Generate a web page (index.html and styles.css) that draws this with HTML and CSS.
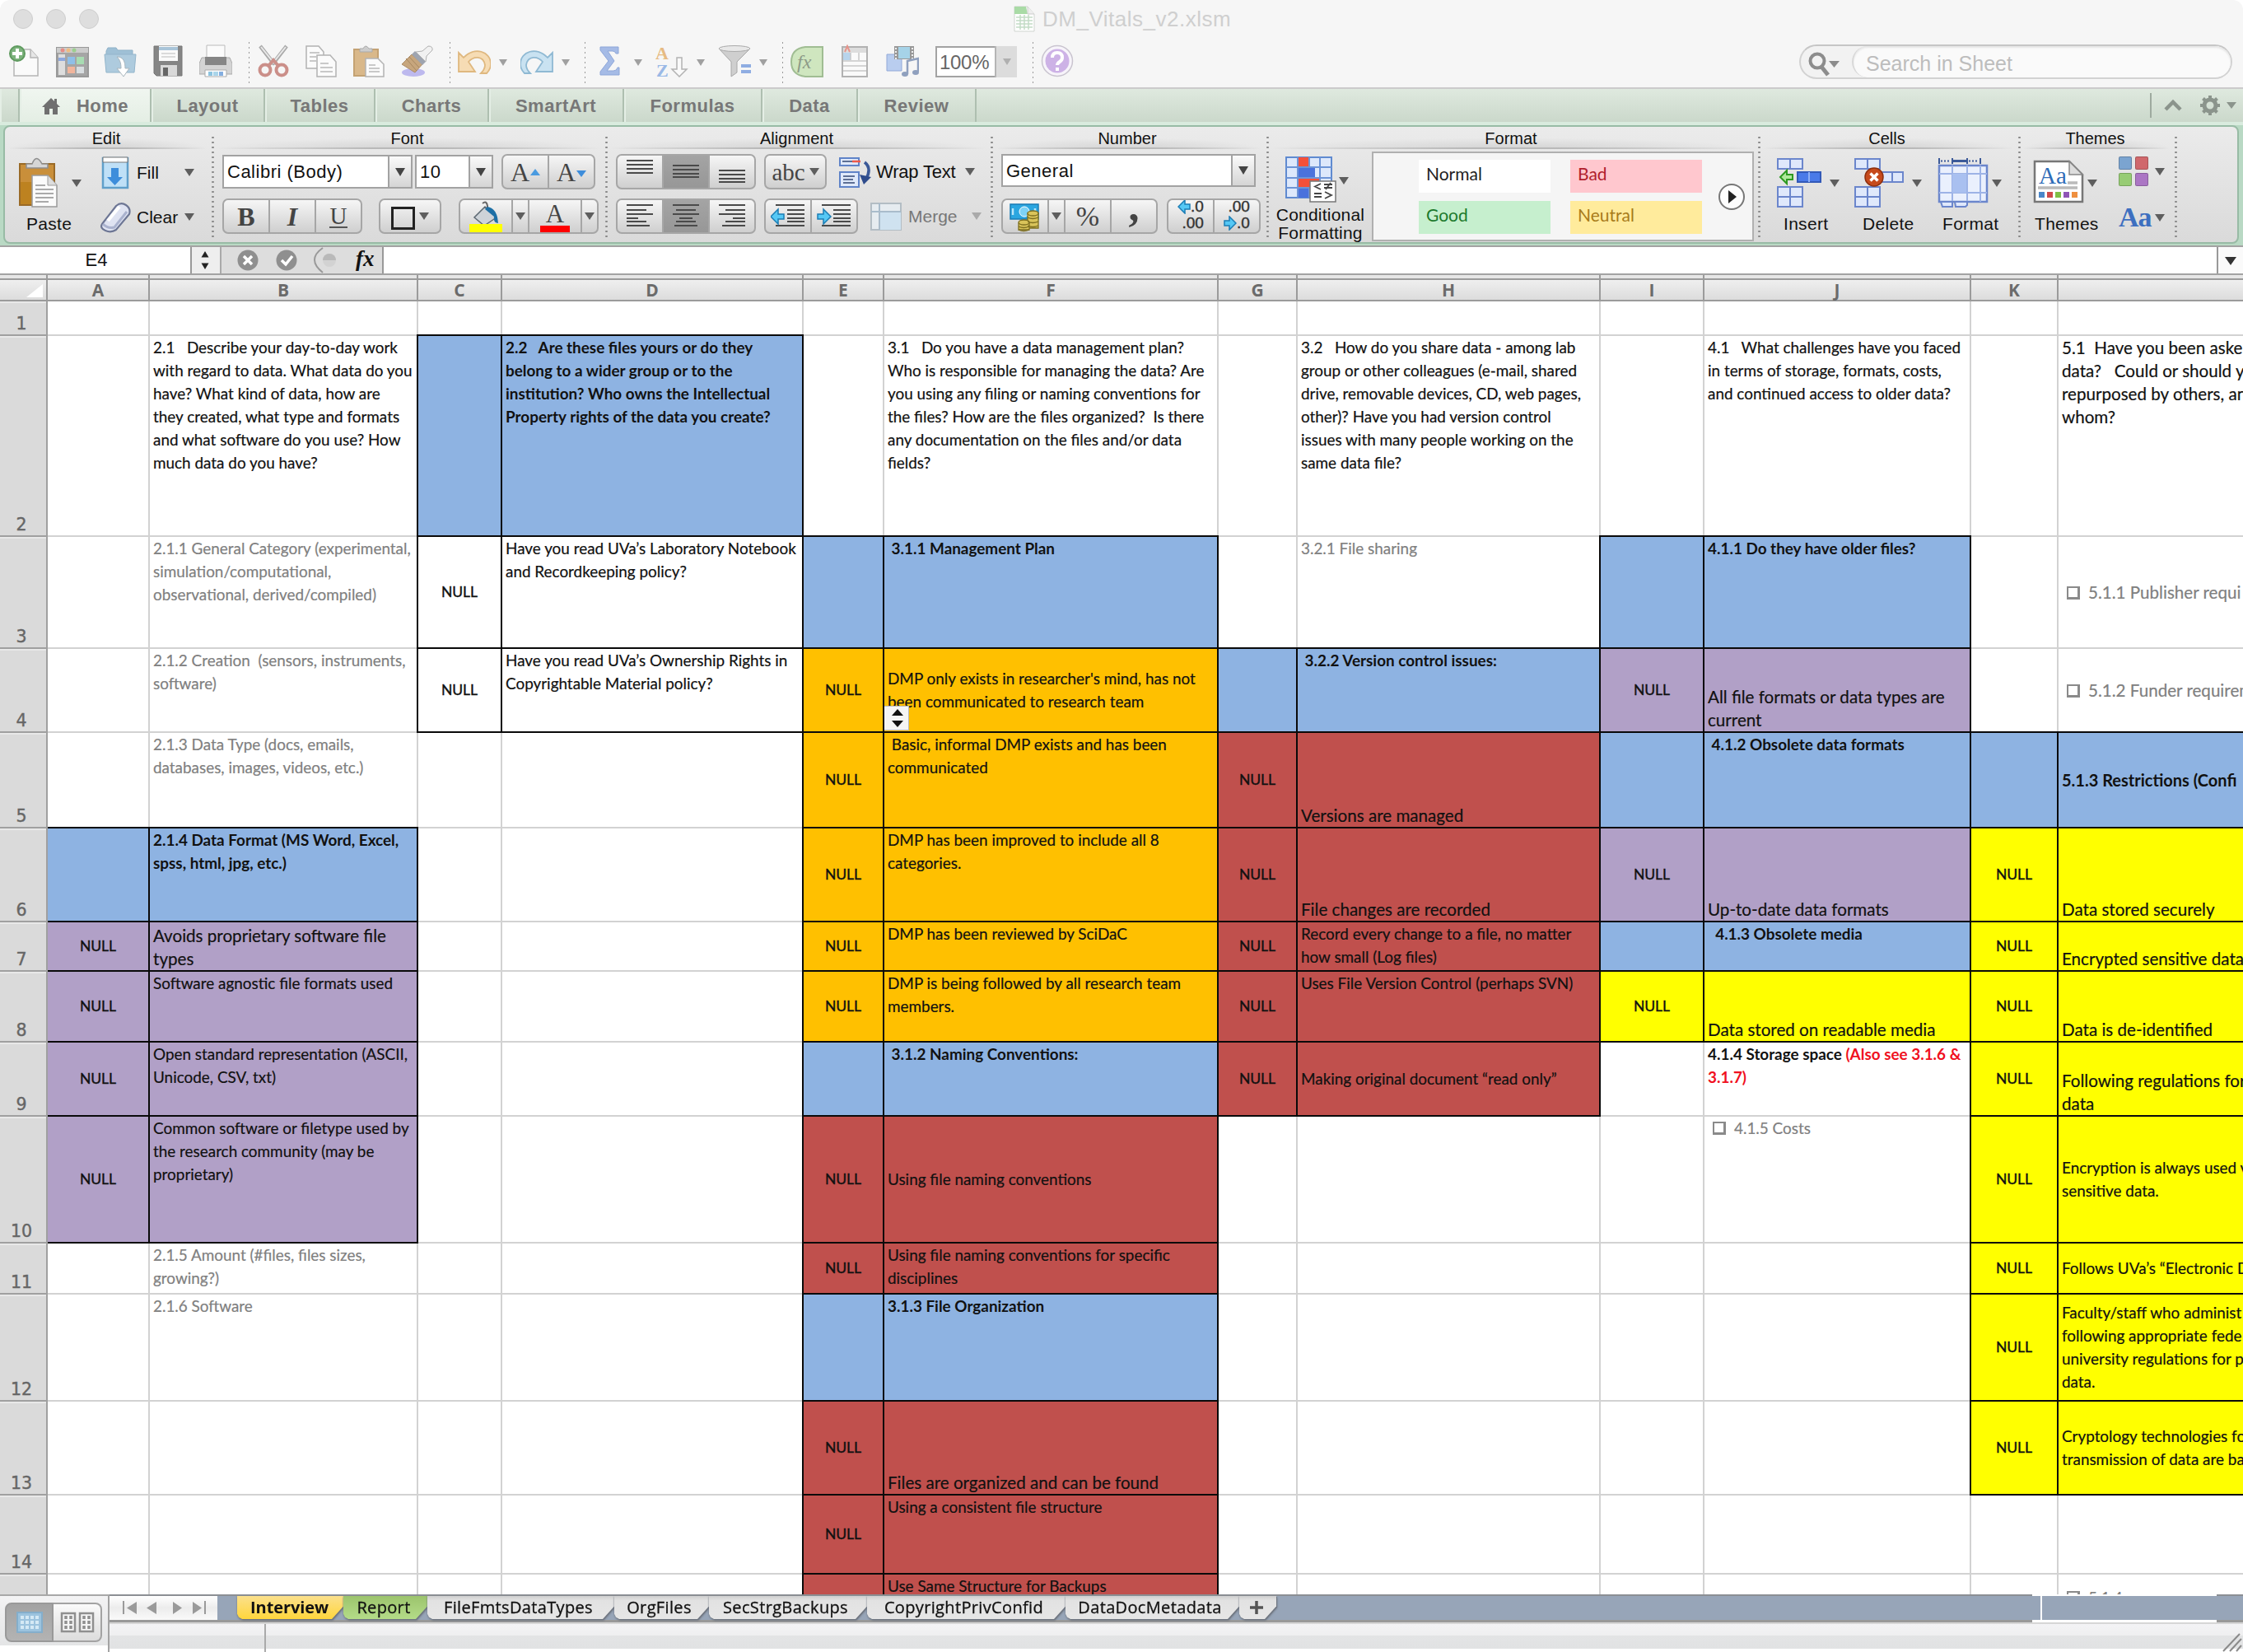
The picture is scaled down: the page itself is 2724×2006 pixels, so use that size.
FILE: index.html
```html
<!DOCTYPE html>
<html lang="en">
<head>
<meta charset="utf-8">
<title>DM_Vitals_v2.xlsm</title>
<link rel="stylesheet" href="styles.css">
</head>
<body>
<div class="window">
<header class="chrome">
  <div class="titlebar">
    <div class="lights"><i></i><i></i><i></i></div>
    <div class="doc-title">
      <svg width="26" height="32" viewBox="0 0 26 32"><path d="M1 1h16l8 9v21H1z" fill="#fff" stroke="#cfd4cf"/><path d="M1 1h14l2 9H1z" fill="#a9dba6"/><path d="M17 1v9h8" fill="#eee" stroke="#ccc"/><path d="M3 14h20M3 18h20M3 22h20M3 26h20M8 11v18M13 11v18M18 11v18" stroke="#c3dcc6" stroke-width="1.5"/></svg>
      <span>DM_Vitals_v2.xlsm</span>
    </div>
  </div>
  <div class="toolbar">
    <div class="tool"><svg viewBox="0 0 40 40"><path d="M7 6h20l9 10v22H7z" fill="#fafafa" stroke="#b5b5b5" stroke-width="1.5"/><path d="M27 6v10h9" fill="#e6e6e6" stroke="#b5b5b5" stroke-width="1.5"/><circle cx="11" cy="11" r="9" fill="#7cb27c" stroke="#5e9a5e" stroke-width="2"/><path d="M11 5v12M5 11h12" stroke="#fff" stroke-width="4"/></svg></div>
    <div class="tool"><svg viewBox="0 0 40 40"><path d="M1 4h38v35H1z" fill="#a5a5a5" stroke="#999" stroke-width="2"/><path d="M1 4h38v6H1z" fill="#ccc"/><path d="M3 12h8v25H3z" fill="#ddd"/><path d="M3 16h8v4H3z" fill="#8ea8de"/><circle cx="8" cy="7" r="2.5" fill="#e58c86"/><circle cx="15" cy="7" r="2.5" fill="#edbc82"/><circle cx="22" cy="7" r="2.5" fill="#9bcf8e"/><path d="M14 15h9v9h-9z" fill="#8fbfe8"/><path d="M25 15h9v9h-9z" fill="#a8dcb2"/><path d="M14 27h9v8h-9z" fill="#f1b59c"/><path d="M25 27h9v8h-9z" fill="#d8dde0"/></svg></div>
    <div class="tool"><svg viewBox="0 0 40 40"><path d="M3 8l2-4h10l2 3h18v6H3z" fill="#9fc0d6" stroke="#8fb1c8"/><path d="M1 12h38l-2 22H3z" fill="#aecbde" stroke="#93b5cb"/><path d="M16 15c8 0 10 6 10 14h5l-7 10-8-10h5c0-6-1-10-5-14z" fill="#fff" stroke="#a9b6be"/></svg></div>
    <div class="tool"><svg viewBox="0 0 40 40"><path d="M3 2h34v36H6l-3-3z" fill="#858585" stroke="#777"/><path d="M9 2h23v18H9z" fill="#fafafa"/><path d="M9 3h23v4H9z" fill="#a9c4d8"/><path d="M12 11h17M12 15h17" stroke="#bbb"/><path d="M11 25h20v13H11z" fill="#d9d9d9"/><path d="M14 28h6v10h-6z" fill="#666"/></svg></div>
    <div class="tool"><svg viewBox="0 0 40 40"><path d="M9 1h22v16H9z" fill="#fbfbfb" stroke="#bbb"/><path d="M3 16h34l3 7v13H0V23z" fill="#d4d4d4" stroke="#aaa"/><path d="M7 15h26v10H7z" fill="#868686"/><path d="M7 31h26v8H7z" fill="#fff" stroke="#aaa"/><path d="M11 33h5v5h-5z" fill="#8cc4e0"/><path d="M17 33h6v5h-6z" fill="#aad5ea"/><path d="M24 33h5v5h-5z" fill="#84aee0"/></svg></div>
    <div class="sep"></div>
    <div class="tool"><svg viewBox="0 0 40 40"><path d="M4 2l17 22M36 2L19 24" stroke="#aaa" stroke-width="4.5"/><path d="M5 3l16 20M35 3L19 23" stroke="#e9e9e9" stroke-width="2"/><circle cx="10" cy="31" r="6.5" fill="none" stroke="#cb8f89" stroke-width="4"/><circle cx="30" cy="31" r="6.5" fill="none" stroke="#cb8f89" stroke-width="4"/><path d="M14 26l6-7 6 7" fill="none" stroke="#cb8f89" stroke-width="4"/></svg></div>
    <div class="tool"><svg viewBox="0 0 40 40"><g fill="#fbfbfb" stroke="#b3b3b3" stroke-width="1.5"><path d="M2 2h15l6 7v20H2z"/><path d="M15 13h16l7 8v18H15z"/></g><path d="M6 10h12M6 15h8M6 20h8M19 23h10M19 28h15M19 33h15" stroke="#b9b9b9" stroke-width="1.6"/></svg></div>
    <div class="tool"><svg viewBox="0 0 40 40"><path d="M2 6h29v32H2z" fill="#d9b88a" stroke="#c4a273" stroke-width="2"/><path d="M9 9V5h4q3-6 7 0h4v4z" fill="#ccc" stroke="#aaa"/><path d="M16 17h15l7 7v15H16z" fill="#fbfbfb" stroke="#b3b3b3" stroke-width="1.5"/><path d="M20 25h8M20 29h13M20 33h13" stroke="#b9b9b9" stroke-width="1.6"/></svg></div>
    <div class="tool"><svg viewBox="0 0 40 40"><ellipse cx="16" cy="34" rx="14" ry="5" fill="#bdb9ee"/><path d="M14 12l13 12-9 10L2 24z" fill="#c7a67d" stroke="#ac8d68"/><path d="M7 17L20 32M11 15l12 13" stroke="#a88860"/><path d="M14 12L18 8l13 13-4 4z" fill="#9ea4b0"/><path d="M19 9l8-1 7-6q6 0 5 5l-7 7-1 7z" fill="#f1f1f1" stroke="#b0b0b0"/></svg></div>
    <div class="sep"></div>
    <div class="tool"><svg viewBox="0 0 40 40"><path d="M1 33V10l6 6C20 2 40 8 40 24q0 6-5 11h-7q5-5 5-10C31 13 19 14 13 21l8 12z" fill="#f6dcb4" stroke="#dfb87f" stroke-width="1.8"/></svg></div>
    <div class="drop"></div>
    <div class="tool"><svg viewBox="0 0 40 40"><path d="M39 33V10l-6 6C20 2 0 8 0 24q0 6 5 11h7q-5-5-5-10C9 13 21 14 27 21l-8 12z" fill="#c9e2f1" stroke="#8fb9d3" stroke-width="1.8"/></svg></div>
    <div class="drop"></div>
    <div class="sep"></div>
    <div class="tool"><svg viewBox="0 0 40 40"><path d="M9 3h22v8h-3q-1-3-4-3h-6l8 12-9 12h8q4 0 5-4h2v9H9v-4l10-13L9 7z" fill="#a5bbe6" stroke="#8da6d8"/></svg></div>
    <div class="drop"></div>
    <div class="tool"><svg viewBox="0 0 40 40"><text x="0" y="18" class="az a">A</text><text x="1" y="39" class="az z">Z</text><path d="M26 16h6v14h6l-9 9-9-9h6z" fill="#fafafa" stroke="#b3b3b3" stroke-width="1.5"/></svg></div>
    <div class="drop"></div>
    <div class="tool"><svg viewBox="0 0 40 40"><path d="M1 5l15 16v18l7-5V21L39 5z" fill="#cfcfcf" stroke="#a8a8a8"/><ellipse cx="20" cy="5" rx="19" ry="3.5" fill="#e8e8e8" stroke="#aaa"/><path d="M28 26h12M28 33h12" stroke="#8fade2" stroke-width="4"/></svg></div>
    <div class="drop"></div>
    <div class="sep"></div>
    <div class="tool"><svg viewBox="0 0 40 40"><path d="M39 3v36H18Q1 37 1 21T18 3z" fill="#cfe6bf" stroke="#a0bd93" stroke-width="2"/><text x="8" y="29" class="fxi">fx</text></svg></div>
    <div class="tool"><svg viewBox="0 0 40 40"><path d="M5 3h30v36H5z" fill="#fafafa" stroke="#b2b2b2" stroke-width="2"/><path d="M6 4h28v6H6z" fill="#ddd"/><path d="M6 10h9v9H6z" fill="#b8d4ec"/><path d="M15 10v9M25 10v9M6 20h28M6 26h28M6 32h28" stroke="#c7c7c7" stroke-width="1.5"/><path d="M8 9l3-7 3 7" fill="none" stroke="#e5958c" stroke-width="2"/></svg></div>
    <div class="tool"><svg viewBox="0 0 40 40"><path d="M1 12h18v20H1z" fill="#b9cdef" stroke="#92a9d8"/><path d="M10 2h24v16H10z" fill="#989898"/><path d="M15 3h14v14H15z" fill="#a6d3e8"/><path d="M12 4v14M32 4v14" stroke="#eee" stroke-width="2" stroke-dasharray="2 2"/><path d="M26 36V20l13-3v16" fill="none" stroke="#8fa0be" stroke-width="2.5"/><ellipse cx="23" cy="36" rx="4" ry="3" fill="#8fa0be"/><ellipse cx="36" cy="34" rx="4" ry="3" fill="#8fa0be"/></svg></div>
    <div class="zoom"><span>100%</span><b></b></div>
    <div class="sep"></div>
    <div class="tool"><svg viewBox="0 0 40 40"><circle cx="20" cy="20" r="18.5" fill="#f7f4fa" stroke="#c9c4cf" stroke-width="1.5"/><circle cx="20" cy="20" r="14.5" fill="#cdb2e6"/><path d="M14 16q0-6 6-6t6 6q0 3-3 5t-3 4M20 28v4" fill="none" stroke="#fff" stroke-width="4"/></svg></div>
    <div class="search">
      <div class="lens"><svg width="40" height="34" viewBox="0 0 40 34"><circle cx="12" cy="13" r="8.5" fill="none" stroke="#8c8c8c" stroke-width="4"/><path d="M17 20l8 10" stroke="#8c8c8c" stroke-width="5"/><path d="M26 13h13l-6.500 8z" fill="#8c8c8c"/></svg></div>
      <div class="query">Search in Sheet</div>
    </div>
  </div>
</header>

<nav class="tabs">
  <div class="tab stub"></div>
  <div class="tab home"><svg width="22" height="20" viewBox="0 0 22 20"><path d="M11 0l4 4V1h3v6l4 4h-3v9h-6v-7H9v7H3v-9H0z" fill="#6f6f6f"/></svg><span>Home</span></div>
  <div class="tab t138">Layout</div>
  <div class="tab t134">Tables</div>
  <div class="tab t138">Charts</div>
  <div class="tab t164">SmartArt</div>
  <div class="tab t168">Formulas</div>
  <div class="tab t116">Data</div>
  <div class="tab t144">Review</div>
  <div class="tab-tools">
    <svg width="110" height="30" viewBox="0 0 110 30"><path d="M1 0v30" stroke="#9eaa9f" stroke-width="2"/><path d="M19 20l9-9 9 9" fill="none" stroke="#8b948c" stroke-width="4.500"/><circle cx="73" cy="15" r="7" fill="none" stroke="#8b948c" stroke-width="5"/><path d="M73 3v5M73 22v5M61 15h5M80 15h5M64.500 6.500l4 4M77.500 19.500l4 4M64.500 23.500l4-4M77.500 10.500l4-4" stroke="#8b948c" stroke-width="4"/><path d="M93 11h12l-6 8z" fill="#8b948c"/></svg>
  </div>
</nav>

<section class="ribbon">
<div class="panel">
  <div class="group g-edit">
    <h2>Edit</h2>
    <div class="cols">
      <div class="big paste">
        <div class="pic"><svg width="50" height="62" viewBox="0 0 50 62"><path d="M2 8h42v50H2z" fill="#c98f3a" stroke="#9a6a26" stroke-width="2"/><path d="M3 30h40v27H3z" fill="#b5790f" opacity=".6"/><path d="M10 13V8h7q5-13 12 0h7v5z" fill="#d6d6d6" stroke="#8f8f8f" stroke-width="1.500"/><path d="M17 22h19l11 12v26H17z" fill="#fbfbfb" stroke="#9b9b9b" stroke-width="1.500"/><path d="M36 22v12h11" fill="#ddd" stroke="#9b9b9b"/><path d="M21 34h12M21 39h22M21 44h22M21 49h22M21 54h16" stroke="#aaa" stroke-width="1.800"/></svg><i class="arr"></i></div>
        <span>Paste</span>
      </div>
      <div class="stack">
        <div class="cmd fill"><svg width="34" height="40" viewBox="0 0 34 40"><path d="M2 2h30v36H2z" fill="#bfe0f7" stroke="#5f9fca" stroke-width="2.500"/><path d="M2 1h30v6H2z" fill="#fff" stroke="#777"/><path d="M12 14h9v11h5l-9.500 10L7 25h5z" fill="#3d8ddb"/></svg><span>Fill</span><i class="arr"></i></div>
        <div class="cmd clear"><svg width="38" height="38" viewBox="0 0 38 38"><path d="M3 27L20 5q6-5 12-1t4 11L20 34q-6 4-13 1T3 27z" fill="#dfe3f2" stroke="#6d7694" stroke-width="2.200"/><path d="M4 27q6 6 14 4l15-19" fill="none" stroke="#aab2ce" stroke-width="3"/><path d="M10 23L24 6" stroke="#fff" stroke-width="4"/></svg><span>Clear</span><i class="arr"></i></div>
      </div>
    </div>
  </div>
  <div class="group g-font">
    <h2>Font</h2>
    <div class="line">
      <div class="combo w231"><span>Calibri (Body)</span><b></b></div>
      <div class="combo w95"><span>10</span><b></b></div>
      <div class="btns szs"><div class="w54"><em class="ser">A</em><i class="up"></i></div><div class="w56"><em class="ser sm">A</em><i class="down"></i></div></div>
    </div>
    <div class="line">
      <div class="btns"><div class="w54"><em class="ser bold">B</em></div><div class="w56"><em class="ser ital">I</em></div><div class="w56"><em class="ser und">U</em></div></div>
      <div class="btns brd"><div class="w74"><i class="sq"></i><i class="arr"></i></div></div>
      <div class="btns fills"><div class="w62"><svg width="42" height="38" viewBox="0 0 42 38"><path d="M17 3q5-4 6 3v9" fill="none" stroke="#666" stroke-width="2"/><path d="M20 7l14 13-15 10L7 20z" fill="#cdd3d8" stroke="#5e6a73" stroke-width="1.500"/><path d="M23 7q12 2 13 20-6 0-5-8L20 10z" fill="#1d6fa5"/><path d="M1 28h40v10H1z" fill="#ff0"/></svg></div><div class="w20"><i class="arr"></i></div><div class="w64"><em class="ser fc">A</em></div><div class="w20"><i class="arr"></i></div></div>
    </div>
  </div>
  <div class="group g-align">
    <h2>Alignment</h2>
    <div class="line">
      <div class="btns"><div class="w54"><svg width="34" height="42" viewBox="0 0 34 42"><path d="M1 7h32M1 12h32M1 17h32M1 22h32" class="ln"/></svg></div><div class="w56 on"><svg width="34" height="42" viewBox="0 0 34 42"><path d="M1 13h32M1 18h32M1 23h32M1 27h32" class="ln"/></svg></div><div class="w56"><svg width="34" height="42" viewBox="0 0 34 42"><path d="M1 19h32M1 24h32M1 29h32M1 33h32" class="ln"/></svg></div></div>
      <div class="btns abc"><div class="w74"><em class="ser">abc</em><i class="arr"></i></div></div>
      <div class="cmd wrap"><svg width="40" height="38" viewBox="0 0 40 38"><path d="M1 2h23v9H1zM1 19h23v18H1z" fill="#dfe9fa" stroke="#5f83c8" stroke-width="2"/><path d="M4 6h12M5 24h14M5 28h12M5 32h14" stroke="#5d6f94" stroke-width="2.200"/><path d="M16 6h10" stroke="#f05a4a" stroke-width="2.500"/><path d="M31 7q9 7 2 20" fill="none" stroke="#3b5998" stroke-width="3.500"/><path d="M25 22l14 3-9 9z" fill="#2f4c8c"/></svg><span>Wrap Text</span><i class="arr"></i></div>
    </div>
    <div class="line">
      <div class="btns"><div class="w54"><svg width="34" height="42" viewBox="0 0 34 42"><path d="M1 7h32M1 13h24M1 18h32M1 23h14M1 27h24M1 32h28" class="ln"/></svg></div><div class="w56 on"><svg width="34" height="42" viewBox="0 0 34 42"><path d="M1 7h32M5 13h24M1 18h32M9 23h16M5 27h24M3 32h28" class="ln"/></svg></div><div class="w56"><svg width="34" height="42" viewBox="0 0 34 42"><path d="M1 7h32M9 13h24M1 18h32M18 23h15M9 27h24M5 32h28" class="ln"/></svg></div></div>
      <div class="btns ind"><div class="w54"><svg width="42" height="42" viewBox="0 0 42 42"><path d="M6 7h35M20 13h21M20 18h21M20 23h21M20 27h21M6 32h35" class="ln"/><path d="M16 18H9v-6l-9 9 9 9v-6h7z" fill="#55c8f5" stroke="#1b7db5" stroke-width="1.500"/></svg></div><div class="w56"><svg width="42" height="42" viewBox="0 0 42 42"><path d="M6 7h35M20 13h21M20 18h21M20 23h21M20 27h21M6 32h35" class="ln"/><path d="M1 18h7v-6l9 9-9 9v-6H1z" fill="#55c8f5" stroke="#1b7db5" stroke-width="1.500"/></svg></div></div>
      <div class="cmd merge"><svg width="38" height="34" viewBox="0 0 38 34"><path d="M1 1h36v32H1z" fill="#e6ecf0" stroke="#b3bdc4" stroke-width="2"/><path d="M11 12h26v21H11z" fill="#cfe2f0"/><path d="M1 11h36M11 1v32" stroke="#a9bccb" stroke-width="2"/></svg><span>Merge</span><i class="arr"></i></div>
    </div>
  </div>
  <div class="group g-num">
    <h2>Number</h2>
    <div class="line">
      <div class="combo w309"><span>General</span><b></b></div>
    </div>
    <div class="line">
      <div class="btns"><div class="w54"><svg width="40" height="38" viewBox="0 0 40 38"><path d="M2 4h34v18H2z" fill="#2ba6e0" stroke="#1a7cb5" stroke-width="1.500"/><circle cx="19" cy="13" r="6" fill="#7ed2f5" stroke="#fff"/><path d="M5 9v8M32 9v4" stroke="#b9e6fa" stroke-width="2.500"/><g fill="#d9c45a" stroke="#7e6f1f" stroke-width="1.300"><path d="M23 15h13v18H23z"/><ellipse cx="29.500" cy="15" rx="6.500" ry="3"/><path d="M12 27h13v8H12z"/><ellipse cx="18.500" cy="26" rx="6.500" ry="3"/><path d="M23 20q6 3 13 0M23 25q6 3 13 0M23 30q6 3 13 0M12 31q6 3 13 0M12 35q6 3 13 0" fill="none"/></g></svg></div><div class="w20"><i class="arr"></i></div><div class="w56"><em class="ser pct">%</em></div><div class="w56"><em class="ser comma">,</em></div></div>
      <div class="btns decs"><div class="w54"><span class="dec"><svg width="16" height="18" viewBox="0 0 16 18"><path d="M15 6H9V1L1 9l8 8v-5h6z" fill="#55c8f5" stroke="#1b7db5" stroke-width="1.500"/></svg>.0<br>.00</span></div><div class="w56"><span class="dec">.00<br><svg width="16" height="18" viewBox="0 0 16 18"><path d="M1 6h6V1l8 8-8 8v-5H1z" fill="#55c8f5" stroke="#1b7db5" stroke-width="1.500"/></svg>.0</span></div></div>
    </div>
  </div>
  <div class="group g-format">
    <h2>Format</h2>
    <div class="cols">
      <div class="big cond">
        <div class="pic"><svg width="64" height="58" viewBox="0 0 64 58"><path d="M1 1h55v49H1z" fill="#dde8fb" stroke="#5f8ad0" stroke-width="2"/><path d="M15 1h14v12H15zM15 26h27v12H15z" fill="#f4503a"/><path d="M15 13h21v13H15zM15 38h14v12H15z" fill="#4a72dc"/><path d="M1 13h55M1 26h55M1 38h55M15 1v49M29 1v12M42 1v49M29 38v12" stroke="#6d94d6" stroke-width="2" fill="none"/><path d="M30 30h31v25H30z" fill="#fff" stroke="#777" stroke-width="1.500"/><path d="M43 33l-7 3.500 7 3.500M47 34h10M47 38h10M55 32l-6 8M35 45h9M35 49h9M48 43l8 4-8 4" fill="none" stroke="#444" stroke-width="1.800"/></svg><i class="arr"></i></div>
        <span>Conditional<br>Formatting</span>
      </div>
      <div class="gallery">
        <div class="sty normal">Normal</div><div class="sty bad">Bad</div><div class="sty good">Good</div><div class="sty neutral">Neutral</div>
        <div class="more"><svg width="34" height="34" viewBox="0 0 34 34"><circle cx="17" cy="17" r="15" fill="#fdfdfd" stroke="#777" stroke-width="2"/><path d="M13 9l10 8-10 8z" fill="#222"/></svg></div>
      </div>
    </div>
  </div>
  <div class="group g-cells">
    <h2>Cells</h2>
    <div class="cols">
      <div class="big insert">
        <div class="pic"><svg width="56" height="62" viewBox="0 0 56 62"><g fill="#dfe8fb" stroke="#6b86cc" stroke-width="2"><path d="M2 2h30v12H2zM17 2v12"/><path d="M2 36h30v24H2zM17 36v24M2 48h30"/></g><path d="M26 18h28v12H26z" fill="#4a7ae8" stroke="#3259b8" stroke-width="2"/><path d="M40 18v12" stroke="#8fb0f5" stroke-width="2"/><path d="M20 21h-7v-5L5 24l8 8v-5h7z" fill="#aee89a" stroke="#2e9a22" stroke-width="2"/></svg><i class="arr"></i></div>
        <span>Insert</span>
      </div>
      <div class="big delete">
        <div class="pic"><svg width="62" height="62" viewBox="0 0 62 62"><g fill="#dfe8fb" stroke="#6b86cc" stroke-width="2"><path d="M2 2h30v12H2zM17 2v12"/><path d="M2 36h30v24H2zM17 36v24M2 48h30"/><path d="M34 18h26v12H34zM47 18v12"/></g><circle cx="25" cy="24" r="11" fill="#c64a1c" stroke="#8e2f0d" stroke-width="1.500"/><path d="M20.500 19.500l9 9M29.500 19.500l-9 9" stroke="#fff" stroke-width="3.500"/></svg><i class="arr"></i></div>
        <span>Delete</span>
      </div>
      <div class="big fmt">
        <div class="pic"><svg width="62" height="62" viewBox="0 0 62 62"><path d="M2 10h58v44H2z" fill="#eaf0fd" stroke="#6b86cc" stroke-width="2.500"/><path d="M2 20h58M2 43h58M18 10v44M36 10v44M52 10v44" stroke="#9db3e6" stroke-width="2"/><path d="M18 20h17v23H18z" fill="#a9c0f0"/><path d="M4 54h14v6H6zM21 54h15v4l-2 2H22z" fill="#dfe8fb" stroke="#6b86cc" stroke-width="2"/><path d="M2 1v7M52 1v7M18 1v7M36 1v7" stroke="#3b5998" stroke-width="2"/><path d="M18 4.500h18" stroke="#3b5998" stroke-width="3"/><path d="M4 4.500h12M38 4.500h12" stroke="#3b5998" stroke-width="2" stroke-dasharray="2 2"/></svg><i class="arr"></i></div>
        <span>Format</span>
      </div>
    </div>
  </div>
  <div class="group g-themes">
    <h2>Themes</h2>
    <div class="cols">
      <div class="big theme">
        <div class="pic"><svg width="62" height="62" viewBox="0 0 62 62"><path d="M2 5h42l16 16v33H2z" fill="#fff" stroke="#777" stroke-width="2.500"/><path d="M44 5v16h16z" fill="#ddd" stroke="#888" stroke-width="1.500"/><text x="7" y="32" class="aa">Aa</text><path d="M42 31h12M6 37h48" stroke="#bbb" stroke-width="3.500"/><path d="M7 42h7v7H7z" fill="#4a86c8"/><path d="M17 42h7v7h-7z" fill="#cf4a4a"/><path d="M27 42h7v7h-7z" fill="#7fbf45"/><path d="M37 42h7v7h-7z" fill="#8e55b5"/><path d="M47 42h7v7h-7z" fill="#ef9040"/></svg><i class="arr"></i></div>
        <span>Themes</span>
      </div>
      <div class="stack minis">
        <div class="mini"><div class="sw"><u class="c1"></u><u class="c2"></u><u class="c3"></u><u class="c4"></u></div><i class="arr"></i></div>
        <div class="mini"><em class="ser blue">Aa</em><i class="arr"></i></div>
      </div>
    </div>
  </div>
</div>
</section>

<div class="formula">
  <div class="name">E4</div>
  <div class="step"><svg width="12" height="24" viewBox="0 0 12 24"><path d="M1.500 8.500L6 1l4.500 7.500zM1.500 15.500L6 23l4.500-7.500z" fill="#222"/></svg></div>
  <div class="fbtns"><svg width="162" height="32" viewBox="0 0 162 32"><circle cx="32" cy="16" r="12.500" fill="#8f8f8f"/><path d="M27 11l10 10M37 11l-10 10" stroke="#fff" stroke-width="3.500"/><circle cx="79" cy="16" r="12.500" fill="#8f8f8f"/><path d="M73 16l5 5 8-10" fill="none" stroke="#fff" stroke-width="3.500"/><path d="M123 1q-20 14 0 30" fill="none" stroke="#999" stroke-width="2"/><circle cx="131" cy="16" r="8" fill="#d2d2d2"/><path d="M123 16a8 8 0 0116 0z" fill="#b9b9b9"/></svg></div>
  <div class="fx">fx</div>
  <div class="field"></div>
  <div class="fdrop"><i></i></div>
</div>

<main class="sheet">
<table>
<colgroup><col style="width:58px"><col style="width:124px"><col style="width:326px"><col style="width:102px"><col style="width:366px"><col style="width:98px"><col style="width:406px"><col style="width:96px"><col style="width:368px"><col style="width:126px"><col style="width:324px"><col style="width:106px"><col style="width:224px"></colgroup>
<thead><tr><th class="corner"><i></i></th><th>A</th><th>B</th><th>C</th><th>D</th><th>E</th><th>F</th><th>G</th><th>H</th><th>I</th><th>J</th><th>K</th><th></th></tr></thead>
<tbody>
<tr style="height:42px"><th>1</th><td></td><td></td><td></td><td></td><td></td><td></td><td></td><td></td><td></td><td></td><td></td><td></td></tr>
<tr style="height:244px"><th>2</th><td></td><td>2.1   Describe your day-to-day work<br>with regard to data. What data do you<br>have? What kind of data, how are<br>they created, what type and formats<br>and what software do you use? How<br>much data do you have?</td><td class="f blue"></td><td class="f blue b">2.2   Are these files yours or do they<br>belong to a wider group or to the<br>institution? Who owns the Intellectual<br>Property rights of the data you create?</td><td></td><td>3.1   Do you have a data management plan?<br>Who is responsible for managing the data? Are<br>you using any filing or naming conventions for<br>the files? How are the files organized?  Is there<br>any documentation on the files and/or data<br>fields?</td><td></td><td>3.2   How do you share data - among lab<br>group or other colleagues (e-mail, shared<br>drive, removable devices, CD, web pages,<br>other)? Have you had version control<br>issues with many people working on the<br>same data file?</td><td></td><td>4.1   What challenges have you faced<br>in terms of storage, formats, costs,<br>and continued access to older data?</td><td></td><td class="lg">5.1  Have you been aske<br>data?   Could or should y<br>repurposed by others, an<br>whom?</td></tr>
<tr style="height:136px"><th>3</th><td></td><td class="g">2.1.1 General Category (experimental,<br>simulation/computational,<br>observational, derived/compiled)</td><td class="f n">NULL</td><td class="f">Have you read UVa’s Laboratory Notebook<br>and Recordkeeping policy?</td><td class="f blue"></td><td class="f blue b"> 3.1.1 Management Plan</td><td></td><td class="g">3.2.1 File sharing</td><td class="f blue"></td><td class="f blue b">4.1.1 Do they have older files?</td><td></td><td class="g mid lg box"><s></s>5.1.1 Publisher requi</td></tr>
<tr style="height:102px"><th>4</th><td></td><td class="g">2.1.2 Creation  (sensors, instruments,<br>software)</td><td class="f n">NULL</td><td class="f">Have you read UVa’s Ownership Rights in<br>Copyrightable Material policy?</td><td class="f org n">NULL</td><td class="f org mid">DMP only exists in researcher's mind, has not<br>been communicated to research team<div class="spin"><svg width="16" height="24" viewBox="0 0 16 24"><path d="M1 9l7-8 7 8zM1 15l7 8 7-8z" fill="#111"/></svg></div></td><td class="f blue"></td><td class="f blue b"> 3.2.2 Version control issues:</td><td class="f pur n">NULL</td><td class="f pur bot">All file formats or data types are<br>current</td><td></td><td class="g mid lg box"><s></s>5.1.2 Funder requirem</td></tr>
<tr style="height:116px"><th>5</th><td></td><td class="g">2.1.3 Data Type (docs, emails,<br>databases, images, videos, etc.)</td><td></td><td></td><td class="f org n">NULL</td><td class="f org"> Basic, informal DMP exists and has been<br>communicated</td><td class="f red n">NULL</td><td class="f red bot">Versions are managed</td><td class="f blue"></td><td class="f blue b"> 4.1.2 Obsolete data formats</td><td class="f blue"></td><td class="f blue b mid lg">5.1.3 Restrictions (Confi</td></tr>
<tr style="height:114px"><th>6</th><td class="f blue"></td><td class="f blue b">2.1.4 Data Format (MS Word, Excel,<br>spss, html, jpg, etc.)</td><td></td><td></td><td class="f org n">NULL</td><td class="f org">DMP has been improved to include all 8<br>categories.</td><td class="f red n">NULL</td><td class="f red bot">File changes are recorded</td><td class="f pur n">NULL</td><td class="f pur bot">Up-to-date data formats</td><td class="f yel n">NULL</td><td class="f yel bot">Data stored securely</td></tr>
<tr style="height:60px"><th>7</th><td class="f pur n">NULL</td><td class="f pur bot">Avoids proprietary software file<br>types</td><td></td><td></td><td class="f org n">NULL</td><td class="f org">DMP has been reviewed by SciDaC</td><td class="f red n">NULL</td><td class="f red">Record every change to a file, no matter<br>how small (Log files)</td><td class="f blue"></td><td class="f blue b">  4.1.3 Obsolete media</td><td class="f yel n">NULL</td><td class="f yel bot">Encrypted sensitive data</td></tr>
<tr style="height:86px"><th>8</th><td class="f pur n">NULL</td><td class="f pur">Software agnostic file formats used</td><td></td><td></td><td class="f org n">NULL</td><td class="f org">DMP is being followed by all research team<br>members.</td><td class="f red n">NULL</td><td class="f red">Uses File Version Control (perhaps SVN)</td><td class="f yel n">NULL</td><td class="f yel bot">Data stored on readable media</td><td class="f yel n">NULL</td><td class="f yel bot">Data is de-identified</td></tr>
<tr style="height:90px"><th>9</th><td class="f pur n">NULL</td><td class="f pur">Open standard representation (ASCII,<br>Unicode, CSV, txt)</td><td></td><td></td><td class="f blue"></td><td class="f blue b"> 3.1.2 Naming Conventions:</td><td class="f red n">NULL</td><td class="f red mid">Making original document “read only”</td><td></td><td class="b">4.1.4 Storage space <span class="warn">(Also see 3.1.6 &amp;<br>3.1.7)</span></td><td class="f yel n">NULL</td><td class="f yel bot">Following regulations for<br>data</td></tr>
<tr style="height:154px"><th>10</th><td class="f pur n">NULL</td><td class="f pur">Common software or filetype used by<br>the research community (may be<br>proprietary)</td><td></td><td></td><td class="f red n">NULL</td><td class="f red mid">Using file naming conventions</td><td></td><td></td><td></td><td class="g box"><s></s>4.1.5 Costs</td><td class="f yel n">NULL</td><td class="f yel mid">Encryption is always used v<br>sensitive data.</td></tr>
<tr style="height:62px"><th>11</th><td></td><td class="g">2.1.5 Amount (#files, files sizes,<br>growing?)</td><td></td><td></td><td class="f red n">NULL</td><td class="f red">Using file naming conventions for specific<br>disciplines</td><td></td><td></td><td></td><td></td><td class="f yel n">NULL</td><td class="f yel mid">Follows UVa’s “Electronic D</td></tr>
<tr style="height:130px"><th>12</th><td></td><td class="g">2.1.6 Software</td><td></td><td></td><td class="f blue"></td><td class="f blue b">3.1.3 File Organization</td><td></td><td></td><td></td><td></td><td class="f yel n">NULL</td><td class="f yel mid">Faculty/staff who administ<br>following appropriate fede<br>university regulations for p<br>data.</td></tr>
<tr style="height:114px"><th>13</th><td></td><td></td><td></td><td></td><td class="f red n">NULL</td><td class="f red bot">Files are organized and can be found</td><td></td><td></td><td></td><td></td><td class="f yel n">NULL</td><td class="f yel mid">Cryptology technologies fo<br>transmission of data are ba</td></tr>
<tr style="height:96px"><th>14</th><td></td><td></td><td></td><td></td><td class="f red n">NULL</td><td class="f red">Using a consistent file structure</td><td></td><td></td><td></td><td></td><td></td><td></td></tr>
<tr style="height:58px"><th></th><td></td><td></td><td></td><td></td><td class="f red"></td><td class="f red">Use Same Structure for Backups</td><td></td><td></td><td></td><td></td><td></td><td class="g mid box"><s></s>5.1.4</td></tr>
</tbody>
</table>
</main>

<footer class="bottom">
  <div class="views"><div class="vb on"><svg width="32" height="26" viewBox="0 0 32 26"><path d="M1 1h30v24H1z" fill="#9cc3de" stroke="#84aecb" stroke-width="2"/><path d="M5 5h4v4H5zM11 5h4v4h-4zM17 5h4v4h-4zM23 5h4v4h-4zM5 11h4v4H5zM11 11h4v4h-4zM17 11h4v4h-4zM23 11h4v4h-4zM5 17h4v4H5zM11 17h4v4h-4zM17 17h4v4h-4zM23 17h4v4h-4z" fill="#d5e9f5"/></svg></div><div class="vb"><svg width="42" height="26" viewBox="0 0 42 26"><path d="M2 2h16v22H2zM24 2h16v22H24z" fill="#f4f4f4" stroke="#8f8f8f" stroke-width="2.500"/><path d="M7 5v16M13 5v16M29 5v16M35 5v16" stroke="#8f8f8f" stroke-width="3.500" stroke-dasharray="4 2"/></svg></div></div>
  <div class="right">
    <div class="strip">
      <div class="nav"><svg width="132" height="30" viewBox="0 0 132 30"><g fill="#9a9a9a"><path d="M16 6h2v16h-2zM33 7v15L21 14.500zM57 7v15L45 14.500zM77 7v15l11-7.500zM101 7v15l11-7.500zM115 6h2v16h-2z"/></g></svg></div>
      <div class="st st1"><span>Interview</span></div>
      <div class="st st2"><span>Report</span></div>
      <div class="st st3"><span>FileFmtsDataTypes</span></div>
      <div class="st st4"><span>OrgFiles</span></div>
      <div class="st st5"><span>SecStrgBackups</span></div>
      <div class="st st6"><span>CopyrightPrivConfid</span></div>
      <div class="st st7"><span>DataDocMetadata</span></div>
      <div class="st st8"><span><svg width="18" height="18" viewBox="0 0 18 18"><path d="M9 1v16M1 9h16" stroke="#555" stroke-width="3.500"/></svg></span></div>
      <div class="hscroll"></div>
    </div>
    <div class="status"><div class="s1"></div><svg class="grip" width="26" height="24" viewBox="0 0 26 24"><path d="M2 23L22 2M10 23L24 8M18 23l6-7" stroke="#8a8a8a" stroke-width="2"/></svg></div>
  </div>
</footer>
</div>
</body>
</html>
```
FILE: styles.css
```css
* { box-sizing: border-box; }
body { margin: 0; background: #fff; font-family: "Liberation Sans", Arial, sans-serif; color: #111; }
svg { display: block; flex: none; }
.window { width: 2724px; height: 2006px; overflow: hidden; display: flex; flex-direction: column; }

/* title bar and toolbar */
.chrome { height: 108px; background: #f6f6f6; border-bottom: 2px solid #cbcbcb; border-radius: 12px 12px 0 0; flex: none; }
.titlebar { height: 46px; display: flex; align-items: center; }
.lights { display: flex; gap: 16px; padding-left: 16px; width: 1231px; }
.lights i { width: 24px; height: 24px; border-radius: 50%; background: #dedede; border: 1px solid #cecece; }
.doc-title { display: flex; align-items: center; gap: 9px; font-size: 26px; letter-spacing: .5px; color: #cfcfcf; }
.toolbar { display: flex; height: 60px; padding-left: 1px; align-items: flex-start; }
.tool { width: 58px; padding: 8px 9px; flex: none; }
.tool svg { width: 40px; height: 40px; }
.sep { width: 12px; height: 52px; margin-top: 3px; flex: none; background: radial-gradient(circle, #999 1px, transparent 1.5px) 6px 0 / 12px 6px repeat-y; }
.drop { width: 18px; padding: 26px 0 0 1px; flex: none; }
.drop::before { content: ""; display: block; width: 10px; height: 8px; background: #a0a0a0; clip-path: polygon(0 0, 100% 0, 50% 100%); }
.az { font: bold 22px "Liberation Serif", serif; }
.az.a { fill: #e6bb83; } .az.z { fill: #9ab9e6; }
.fxi { font: italic 24px "Liberation Serif", serif; fill: #8d9a87; }
.zoom { width: 99px; height: 38px; margin: 10px 8px 0 11px; border: 2px solid #a3a3a3; background: #fff; display: flex; font-size: 24px; color: #666; line-height: 35px; flex: none; }
.zoom span { flex: 1; padding-left: 3px; letter-spacing: -.3px; }
.zoom b { width: 27px; border-left: 2px solid #b5b5b5; background: #dcdcdc; margin: -2px; display: flex; align-items: center; justify-content: center; }
.zoom b::before { content: ""; border: 5px solid transparent; border-top: 8px solid #b0b0b0; border-bottom: 0; }
.search { margin: 8px 0 0 872px; width: 526px; height: 42px; border: 2px solid #d2d2d2; border-top-color: #c6c6c6; border-radius: 21px; background: #f2f2f2; display: flex; flex: none; }
.lens { width: 62px; padding: 5px 0 0 8px; }
.query { flex: 1; border-radius: 19px; border-left: 2px solid #d8d8d8; background: #fafafa; color: #bdbdbd; font-size: 25px; line-height: 42px; height: 38px; padding-left: 15px; box-shadow: inset 0 2px 2px #e6e6e6; }

/* ribbon tabs */
.tabs { height: 40px; display: flex; background: linear-gradient(#dfe9df, #cbd8cb); font: bold 22px "Liberation Sans", Arial, sans-serif; letter-spacing: .5px; color: #777; flex: none; }
.tab { border-right: 2px solid #aebfb0; display: flex; align-items: center; justify-content: center; box-shadow: inset 2px 0 #e4eee5; flex: none; padding-top: 2px; }
.stub { width: 24px; } .home { width: 160px; background: linear-gradient(#f0f6f0, #e4eee4); gap: 20px; padding-left: 1px; }
.t138 { width: 138px; } .t134 { width: 134px; } .t164 { width: 164px; } .t168 { width: 168px; } .t116 { width: 116px; } .t144 { width: 144px; }
.tab-tools { margin-left: auto; padding: 5px 3px 0 0; }

/* ribbon */
.ribbon { height: 152px; background: #b9d9c4; border-top: 4px solid #d9ebde; padding: 0 5px 0 4px; border-bottom: 2px solid #a3a3a3; flex: none; }
.panel { height: 144px; border: 2px solid #98bba5; border-radius: 8px; background: linear-gradient(#ebebeb, #dadada); display: flex; }
.group { height: 140px; position: relative; flex: none; }
.group::after { content: ""; position: absolute; right: -1px; top: 10px; height: 124px; width: 3px; background: radial-gradient(circle, #888 1px, transparent 1.5px) 0 0 / 3px 6px; }
.g-edit { width: 253px; } .g-font { width: 478px; } .g-align { width: 468px; } .g-num { width: 335px; } .g-format { width: 597px; } .g-cells { width: 316px; } .g-themes { width: 190px; }
.group h2 { margin: 0 8px 6px 4px; height: 27px; font-size: 20px; font-weight: normal; line-height: 28px; text-align: center; padding-right: 3px; background: linear-gradient(90deg, transparent, #b9b9b9 40%, #b9b9b9 60%, transparent) bottom / 100% 2px no-repeat, radial-gradient(ellipse 50% 50% at 50% 100%, #d3d3d3, transparent); }
.line { display: flex; height: 43px; margin-bottom: 11px; padding-left: 11px; }
.cols { display: flex; }
.btns { display: flex; height: 43px; border: 2px solid #a6a6a6; border-radius: 7px; background: linear-gradient(#f6f6f6, #cfcfcf); overflow: hidden; flex: none; }
.btns > div { display: flex; align-items: center; justify-content: center; }
.btns > div + div { border-left: 2px solid #a6a6a6; }
.btns .on { background: linear-gradient(#a4a4a4, #979797); }
.w54 { width: 54px; } .w56 { width: 56px; } .w74 { width: 72px; } .w62 { width: 62px; } .w20 { width: 20px; } .w64 { width: 64px; }
.ln { stroke: #4a4a4a; stroke-width: 2; fill: none; }
.arr { display: inline-block; border: 6px solid transparent; border-top: 9px solid #5e5e5e; border-bottom: 0; flex: none; }
.ser { font: normal 32px/36px "Liberation Serif", serif; color: #444; }
.bold { font-weight: bold; } .ital { font-style: italic; font-weight: bold; } .und { font-size: 29px; border-bottom: 2px solid #555; line-height: 26px; padding: 0 1px; }
.fc { line-height: 28px; border-bottom: 8px solid red; padding: 0 7px; font-size: 31px; margin-top: 2px; }
.up, .down { border: 6px solid transparent; margin-left: 1px; }
.up { border-bottom: 8px solid #4a9be0; border-top: 0; } .down { border-top: 8px solid #3d8ddb; border-bottom: 0; margin-top: 4px; }
.pct { font-size: 34px; } .comma { font-size: 52px; font-weight: bold; line-height: 20px; margin-top: -24px; }
.sq { width: 29px; height: 28px; border: 3px solid #222; margin: 5px 5px 0 0; }
.combo { height: 41px; margin-top: 1px; background: #fff; border: 2px solid #a2a2a2; display: flex; font-size: 22px; line-height: 37px; flex: none; }
.combo span { flex: 1; padding-left: 4px; letter-spacing: .5px; }
.combo b { width: 28px; border-left: 2px solid #a2a2a2; background: linear-gradient(#fafafa, #d5d5d5); display: flex; align-items: center; justify-content: center; }
.combo b::before { content: ""; border: 6px solid transparent; border-top: 10px solid #444; border-bottom: 0; }
.w231 { width: 231px; margin-right: 3px; } .w95 { width: 95px; } .w309 { width: 309px; margin-top: 0; height: 40px; }
.szs { margin-left: 10px; } .brd { margin-left: 20px; } .fills { margin-left: 21px; } .abc { margin-left: 10px; } .ind { margin-left: 10px; }
.abc .ser { font-size: 29px; margin-right: 5px; }
.cmd { display: flex; align-items: center; font-size: 21px; height: 43px; }
.wrap { margin-left: 15px; font-size: 22px; } .wrap span { margin: 0 12px 0 5px; width: 96px; white-space: nowrap; letter-spacing: -.2px; }
.merge { margin-left: 15px; color: #777; } .merge span { margin: 0 17px 0 8px; width: 60px; } .merge .arr { border-top-color: #aaa; }
.decs { margin-left: 11px; }
.dec { font-size: 19px; line-height: 20px; text-align: right; color: #333; -webkit-text-stroke: .4px #333; margin-top: -3px; }
.dec svg { display: inline-block; vertical-align: -3px; }
.big { display: flex; flex-direction: column; font-size: 21px; line-height: 24px; }
.big .pic { display: flex; align-items: center; height: 62px; margin-top: 4px; }
.big > span { letter-spacing: .3px; margin-top: 7px; white-space: nowrap; }
.paste { width: 100px; padding-left: 16px; } .paste .arr { margin-left: 15px; } .paste > span { padding-left: 10px; }
.stack { padding-left: 17px; } .fill, .clear { width: 120px; }
.fill { margin: 1px 0 11px; } .fill span { margin-left: 9px; width: 54px; } .fill .arr { margin-left: 4px; }
.clear span { margin-left: 7px; width: 54px; } .clear .arr { margin-left: 4px; } .clear svg { margin-left: -2px; }
.cond { width: 126px; padding-left: 5px; } .cond .pic { padding-left: 16px; margin-top: 0; height: 64px; } .cond .arr { margin-left: 1px; }
.cond > span { line-height: 22px; text-align: center; margin: -1px 0 0 -4px; letter-spacing: .2px; }
.gallery { width: 464px; height: 109px; margin-top: -3px; border: 2px solid #b0b0b0; background: #f5f5f5; display: grid; grid-template-columns: 160px 160px 64px; grid-template-rows: 40px 40px; gap: 10px 24px; padding: 8px 0 0 55px; }
.sty { font: 21px/34px Lato, sans-serif; padding-left: 9px; }
.normal { background: #fff; color: #222; } .bad { background: #ffc7ce; color: #b1202c; } .good { background: #c6efce; color: #1c7a2c; grid-row: 2; } .neutral { background: #ffeb9c; color: #a87b1a; grid-row: 2; }
.more { grid-column: 3; grid-row: 1 / 3; padding-top: 28px; margin-left: -5px; }
.insert, .delete, .fmt, .theme { flex: none; }
.insert { width: 95px; padding-left: 20px; } .insert .arr, .delete .arr, .fmt .arr { margin-left: 9px; } .insert > span { padding-left: 9px; }
.delete { width: 102px; padding-left: 19px; } .delete > span { padding-left: 11px; }
.fmt { width: 100px; padding-left: 19px; } .fmt .arr { margin-left: 4px; } .fmt > span { padding-left: 6px; }
.theme { width: 100px; padding-left: 16px; } .theme .arr { margin-left: 4px; } .theme > span { padding-left: 2px; }
.aa { font: 29px "Liberation Serif", serif; fill: #2f6cb8; }
.minis { padding: 3px 0 0 20px; }
.mini { display: flex; align-items: center; width: 56px; height: 36px; margin-bottom: 20px; justify-content: space-between; }
.sw { display: grid; grid-template-columns: 16px 16px; gap: 4px; } .sw u { height: 16px; border-radius: 2px; border: 1px solid #0003; }
.c1 { background: #7ba4d0; } .c2 { background: #d0686c; } .c3 { background: #97cc74; } .c4 { background: #ab76c4; }
.blue { color: #3d6fc0; }
.mini .ser { font-size: 34px; font-weight: bold; letter-spacing: -1px; }

/* formula bar */
.formula { height: 32px; display: flex; background: #fff; flex: none; }
.name { width: 231px; text-align: center; font-size: 22px; line-height: 32px; padding-left: 3px; }
.step { width: 36px; border-left: 2px solid #999; background: #eee; padding: 4px 0 0 10px; }
.fbtns { width: 162px; border-left: 2px solid #aaa; background: #ddd; }
.fx { width: 37px; background: #ddd; border-right: 2px solid #999; font: italic bold 27px/29px "Liberation Serif", serif; padding-left: 3px; }
.field { flex: 1; }
.fdrop { width: 32px; border-left: 2px solid #999; background: #fafafa; padding: 12px 0 0 8px; }
.fdrop i { display: block; width: 14px; border: 7px solid transparent; border-top: 10px solid #333; border-bottom: 0; }

/* worksheet */
.sheet { height: 1604px; border-top: 2px solid #a3a3a3; overflow: hidden; flex: none; }
table { table-layout: fixed; width: 2724px; border-collapse: separate; border-spacing: 0; }
thead tr { height: 32px; }
thead th { border-right: 2px solid #9b9b9b; border-bottom: 2px solid #9b9b9b; padding: 5px 0 0; background: linear-gradient(#e6e6e6 0 4px, #9b9b9b 4px 6px, #efefef 6px, #dcdcdc); font: bold 21px/22px "Open Sans", sans-serif; color: #6b6b6b; }
thead th:last-child { border-right: 0; }
thead th.corner i { display: block; margin: 2px 4px 0 auto; width: 0; border-left: 20px solid transparent; border-bottom: 16px solid #fff; }
tbody th { background: #dadada; border-right: 2px solid #a0a0a0; border-bottom: 2px solid #a0a0a0; padding: 0 4px 0 0; vertical-align: bottom; font: 20.500px/26px "DejaVu Sans", sans-serif; color: #666; -webkit-text-stroke: .4px #666; box-shadow: inset 0 2px #e8e8e8; }
td { padding: 0 0 0 4px; border-right: 2px solid #d2d2d2; border-bottom: 2px solid #d2d2d2; vertical-align: top; white-space: pre; overflow: hidden; font: 18.900px/28px Lato, sans-serif; position: relative; -webkit-text-stroke: .2px; }
td:nth-child(13) { border-right: 0; }
.f { border-color: #0a0a0a; box-shadow: -2px 0 #0a0a0a, 0 -2px #0a0a0a, -2px -2px #0a0a0a; }
td.f:nth-child(2) { box-shadow: 0 -2px #0a0a0a; }
td.blue { background: #8eb3e2; color: #111; } .org { background: #ffc000; } .red { background: #c0504d; } .pur { background: #b1a0c7; } .yel { background: #ff0; }
.b { font-weight: bold; -webkit-text-stroke: 0; }
.g { color: #808080; }
.n { text-align: center; vertical-align: middle; padding: 0; font-size: 17.500px; -webkit-text-stroke: .4px; }
.mid { vertical-align: middle; }
.bot { vertical-align: bottom; font-size: 20.600px; }
.lg { font-size: 20.600px; }
.b.lg { font-size: 20px; }
.warn { color: #f01020; }
.box s { display: inline-block; width: 16px; height: 16px; border: 2px solid #8a8a8a; border-right-width: 3px; border-bottom-width: 3px; margin: 0 10px -1px 6px; }
.spin { position: absolute; left: -1px; bottom: 1px; width: 31px; height: 30px; background: #f5f5f5; border: 1px solid #bbb; padding: 2px 0 0 8px; }

/* sheet tabs and status bar */
.bottom { display: flex; height: 70px; flex: none; }
.views { width: 133px; border-top: 2px solid #a8a8a8; border-right: 2px solid #a3a3a3; background: linear-gradient(#f3f3f4, #e4e5e6 60px, #fff 60px); padding: 8px 0 0 6px; display: flex; }
.vb { width: 59px; height: 48px; border: 2px solid #a3a3a3; border-left: 0; border-radius: 0 8px 8px 0; background: linear-gradient(#fafafa, #dcdcdc); display: flex; align-items: center; justify-content: center; }
.vb.on { border: 2px solid #999; border-radius: 8px 0 0 8px; background: linear-gradient(#a3a3a3, #b3b3b3); }
.right { flex: 1; min-width: 0; }
.strip { height: 34px; display: flex; background: #97a5b8; border-top: 2px solid #8c8f94; border-bottom: 3px solid #999; }
.nav { width: 131px; margin-right: 24px; background: linear-gradient(#fff, #ececec 50%, #fafafa); flex: none; }
.st { height: 28px; filter: drop-shadow(1px 1px 0 #6f7681) drop-shadow(0 1px 1px #6f7681); flex: none; }
.st span { display: flex; justify-content: center; align-items: center; height: 28px; padding-right: 6px; background: linear-gradient(#cfcfcf, #e2e2e2 20%, #e6e6e6); clip-path: polygon(0 0, 100% 0, 100% 45%, calc(100% - 14px) 100%, 6px 100%, 2px 92%, 0 78%); font: 20px/28px "Open Sans", sans-serif; letter-spacing: .35px; -webkit-text-stroke: .3px; }
.st1 { width: 129px; } .st1 span { background: linear-gradient(#fbe08c, #ffd63c); font-weight: bold; letter-spacing: -.1px; padding-right: 2px; -webkit-text-stroke: 0; }
.st2 { width: 102px; } .st2 span { background: linear-gradient(#9cc46d, #b4dc88); padding-right: 4px; }
.st3 { width: 227px; } .st4 { width: 115px; } .st5 { width: 192px; } .st6 { width: 241px; } .st7 { width: 211px; } .st8 { width: 45px; }
.st8 span { padding-right: 4px; }
.hscroll { width: 224px; height: 34px; margin: -2px 32px 0 auto; border-top: 2px solid #fff; border-bottom: 3px solid #fff; background: linear-gradient(#fff, #fff) 10px 0 / 2px 100% no-repeat; }
.status { height: 36px; border-top: 2px solid #d6d6d6; background: linear-gradient(#f3f3f5, #efeff0 14px, #e3e4e5 14px, #e1e2e3 30px, #fff 30px); display: flex; }
.s1 { width: 190px; border-right: 2px solid #aaa; }
.grip { margin: 10px 0 0 auto; }
```
